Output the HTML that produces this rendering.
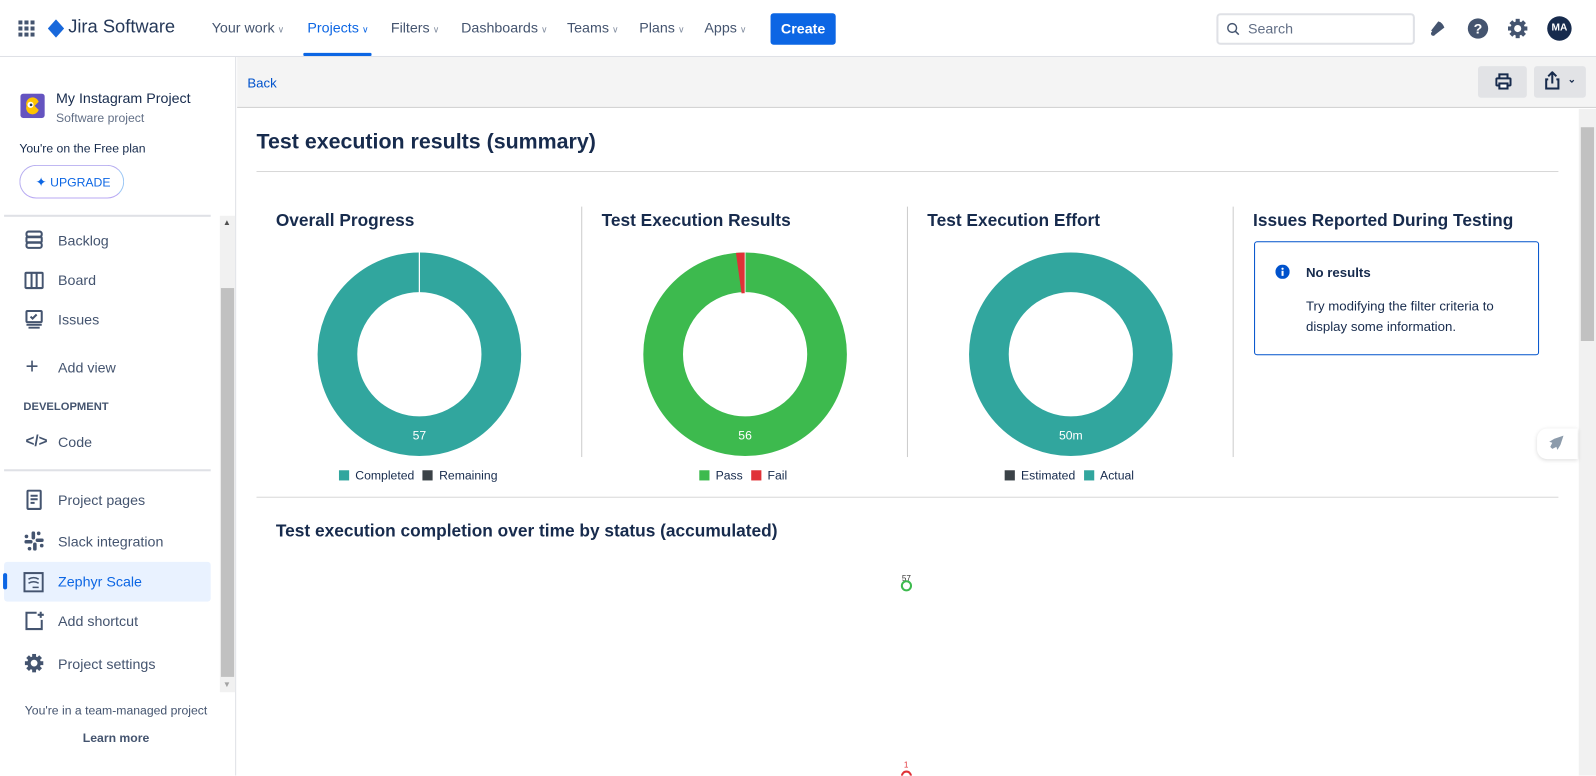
<!DOCTYPE html>
<html><head><meta charset="utf-8">
<style>
*{box-sizing:border-box;margin:0;padding:0}
html,body{width:1596px;height:775px;overflow:hidden;background:#fff;font-family:"Liberation Sans",Arial,sans-serif;color:#172b4d}
#w{position:absolute;left:0;top:0;width:1568px;height:762px;transform:scale(1.0179);transform-origin:0 0;overflow:hidden}
.a{position:absolute}
.nav{left:0;top:0;width:1568px;height:56px;border-bottom:1px solid #dfe1e6;background:#fff}
.ni{top:19px;font-size:14px;color:#44546f;white-space:nowrap}
.ni i{font-style:normal;font-size:9px;color:#8590a2;margin-left:3px}
.side{left:0;top:56px;width:232px;height:706px;border-right:1px solid #dfe1e6;background:#fff}
.it{font-size:14px;color:#44546f;left:57px}
.ic{left:24px}
.ct{font-size:17px;font-weight:bold;color:#172b4d;top:207px;white-space:nowrap}
.sep{width:1px;background:#ccc;top:203px;height:246px}
.lg{font-size:12px;color:#172b4d;top:460px;white-space:nowrap}
.sq{display:inline-block;width:10px;height:10px;vertical-align:-1px;margin-right:6px}
</style></head><body><div id="w">

<div class="a nav"></div>
<svg class="a" style="left:18px;top:20px" width="16" height="16" viewBox="0 0 16 16" fill="#44546f">
<rect x="0" y="0" width="4" height="4"/><rect x="6" y="0" width="4" height="4"/><rect x="12" y="0" width="4" height="4"/>
<rect x="0" y="6" width="4" height="4"/><rect x="6" y="6" width="4" height="4"/><rect x="12" y="6" width="4" height="4"/>
<rect x="0" y="12" width="4" height="4"/><rect x="6" y="12" width="4" height="4"/><rect x="12" y="12" width="4" height="4"/></svg>
<svg class="a" style="left:47px;top:19px" width="16" height="18" viewBox="0 0 16 18"><path d="M8 0 L16 9 L8 18 L0 9Z" fill="#1868db"/></svg>
<div class="a" style="left:67px;top:16px;font-size:18px;color:#253858">Jira Software</div>
<div class="a ni" style="left:208px">Your work<i>∨</i></div>
<div class="a ni" style="left:302px;color:#0c66e4">Projects<i style="color:#0c66e4">∨</i></div>
<div class="a" style="left:298px;top:52px;width:67px;height:3px;background:#0c66e4;border-radius:1px"></div>
<div class="a ni" style="left:384px">Filters<i>∨</i></div>
<div class="a ni" style="left:453px">Dashboards<i>∨</i></div>
<div class="a ni" style="left:557px">Teams<i>∨</i></div>
<div class="a ni" style="left:628px">Plans<i>∨</i></div>
<div class="a ni" style="left:692px">Apps<i>∨</i></div>
<div class="a" style="left:757px;top:13px;width:64px;height:31px;background:#0c66e4;border-radius:3px;color:#fff;font-size:14px;font-weight:bold;text-align:center;line-height:31px">Create</div>
<div class="a" style="left:1195px;top:13px;width:195px;height:31px;border:2px solid #dfe1e6;border-radius:4px"></div>
<svg class="a" style="left:1205px;top:22px" width="13" height="13" viewBox="0 0 13 13"><circle cx="5.5" cy="5.5" r="4.3" stroke="#44546f" stroke-width="1.4" fill="none"/><path d="M8.6 8.6L12 12" stroke="#44546f" stroke-width="1.5"/></svg>
<div class="a" style="left:1226px;top:20px;font-size:14px;color:#626f86">Search</div>
<svg class="a" style="left:1402px;top:18px" width="20" height="20" viewBox="0 0 20 20"><path d="M4 12 L11 3 Q15 4 17 9 L8 16Z" fill="#44546f"/><circle cx="6" cy="15" r="2.2" fill="#44546f"/></svg>
<svg class="a" style="left:1441px;top:17px" width="22" height="22" viewBox="0 0 22 22"><circle cx="11" cy="11" r="10" fill="#44546f"/><text x="11" y="16" text-anchor="middle" font-family="Liberation Sans" font-weight="bold" font-size="14" fill="#fff">?</text></svg>
<svg class="a" style="left:1481px;top:18px" width="20" height="20" viewBox="0 0 20 20"><g fill="#44546f"><circle cx="10" cy="10" r="7"/><rect x="8" y="0.5" width="4" height="19"/><rect x="0.5" y="8" width="19" height="4"/><rect x="8" y="0.5" width="4" height="19" transform="rotate(45 10 10)"/><rect x="8" y="0.5" width="4" height="19" transform="rotate(-45 10 10)"/></g><circle cx="10" cy="10" r="3.5" fill="#fff"/></svg>
<div class="a" style="left:1520px;top:16px;width:24px;height:24px;border-radius:50%;background:#172b4d;color:#fff;font-size:10px;font-weight:bold;text-align:center;line-height:24px">MA</div>

<div class="a side"></div>
<svg class="a" style="left:20px;top:92px" width="24" height="24" viewBox="0 0 24 24"><rect width="24" height="24" rx="3" fill="#6554c0"/><path d="M6 12 A6 6 0 0 1 18 8 L14 12 L18 16 A6 6 0 0 1 6 12Z" fill="#ffc400"/><circle cx="10" cy="11" r="3" fill="#fff"/><circle cx="10.5" cy="11" r="1.3" fill="#253858"/></svg>
<div class="a" style="left:55px;top:88px;font-size:14px;color:#172b4d;font-weight:500">My Instagram Project</div>
<div class="a" style="left:55px;top:109px;font-size:12px;color:#626f86">Software project</div>
<div class="a" style="left:19px;top:139px;font-size:12px;color:#172b4d">You're on the Free plan</div>
<div class="a" style="left:19px;top:162px;width:103px;height:33px;border-radius:17px;border:1.5px solid #b7aef0;border-right-color:#9cc7f5;border-bottom-color:#b8a8f3"></div>
<div class="a" style="left:35px;top:171px;font-size:12px;color:#0c66e4"><span style="font-size:13px">✦</span> UPGRADE</div>
<div class="a" style="left:4px;top:211px;width:203px;height:2px;background:#dfe1e6"></div>
<div class="a" style="left:216px;top:212px;width:15px;height:468px;background:#f1f1f1"></div>
<div class="a" style="left:217px;top:283px;width:13px;height:382px;background:#c1c1c1"></div>
<div class="a" style="left:219px;top:214px;font-size:8px;color:#505050">▲</div>
<div class="a" style="left:219px;top:668px;font-size:8px;color:#a3a3a3">▼</div>

<svg class="a ic" style="top:226px" width="19" height="19" viewBox="0 0 19 19" fill="none" stroke="#44546f" stroke-width="2"><rect x="2" y="1.5" width="15" height="5" rx="2"/><rect x="2" y="7" width="15" height="5" rx="1"/><rect x="2" y="12.5" width="15" height="5" rx="2"/></svg>
<div class="a it" style="top:228px">Backlog</div>
<svg class="a ic" style="top:266px" width="19" height="19" viewBox="0 0 19 19" fill="none" stroke="#44546f" stroke-width="2"><rect x="1" y="2" width="17" height="15" rx="1"/><path d="M7 2v15M12 2v15"/></svg>
<div class="a it" style="top:267px">Board</div>
<svg class="a ic" style="top:304px" width="19" height="19" viewBox="0 0 19 19" fill="none" stroke="#44546f" stroke-width="2"><rect x="2" y="1.5" width="15" height="11" rx="1"/><path d="M6 7l2 2 4-4M2 15h15M4 18h11"/></svg>
<div class="a it" style="top:306px">Issues</div>
<div class="a" style="left:25px;top:349px;font-size:22px;color:#44546f;line-height:22px">+</div>
<div class="a it" style="top:353px">Add view</div>
<div class="a" style="left:23px;top:394px;font-size:11px;font-weight:bold;color:#44546f">DEVELOPMENT</div>
<div class="a" style="left:25px;top:425px;font-size:15px;font-weight:bold;color:#44546f">&lt;/&gt;</div>
<div class="a it" style="top:426px">Code</div>
<div class="a" style="left:4px;top:461px;width:203px;height:2px;background:#dfe1e6"></div>
<svg class="a ic" style="top:481px" width="19" height="20" viewBox="0 0 19 20" fill="none" stroke="#44546f" stroke-width="2"><rect x="3" y="1" width="13" height="18" rx="1"/><path d="M6 6h7M6 9.5h7M6 13h4"/></svg>
<div class="a it" style="top:483px">Project pages</div>
<svg class="a ic" style="top:522px" width="19" height="19" viewBox="0 0 19 19" fill="#44546f"><rect x="7" y="0" width="3.5" height="8" rx="1.7"/><rect x="8.5" y="11" width="3.5" height="8" rx="1.7"/><rect x="0" y="8.5" width="8" height="3.5" rx="1.7"/><rect x="11" y="7" width="8" height="3.5" rx="1.7"/><circle cx="2" cy="5" r="1.8"/><circle cx="17" cy="14" r="1.8"/><circle cx="14" cy="2" r="1.8"/><circle cx="5" cy="17" r="1.8"/></svg>
<div class="a it" style="top:524px">Slack integration</div>
<div class="a" style="left:4px;top:552px;width:203px;height:39px;background:#e9f2ff;border-radius:3px"></div>
<div class="a" style="left:3px;top:563px;width:4px;height:16px;background:#0c66e4;border-radius:2px"></div>
<svg class="a" style="left:23px;top:562px" width="20" height="20" viewBox="0 0 20 20" fill="none" stroke="#44546f" stroke-width="2"><rect x="1" y="1" width="18" height="18"/><path d="M5 7q5-3 10 0M5 11q5-3 10 0M9 15h6" stroke-width="1.5"/></svg>
<div class="a it" style="top:563px;color:#0c66e4">Zephyr Scale</div>
<svg class="a ic" style="top:600px" width="20" height="20" viewBox="0 0 20 20" fill="none" stroke="#44546f" stroke-width="2"><path d="M12 2H2v16h15V9M16 1v6M13 4h6"/></svg>
<div class="a it" style="top:602px">Add shortcut</div>
<svg class="a ic" style="top:642px" width="19" height="19" viewBox="0 0 20 20"><g fill="#44546f"><circle cx="10" cy="10" r="7"/><rect x="8" y="0.5" width="4" height="19"/><rect x="0.5" y="8" width="19" height="4"/><rect x="8" y="0.5" width="4" height="19" transform="rotate(45 10 10)"/><rect x="8" y="0.5" width="4" height="19" transform="rotate(-45 10 10)"/></g><circle cx="10" cy="10" r="3.5" fill="#fff"/></svg>
<div class="a it" style="top:644px">Project settings</div>
<div class="a" style="left:0;width:228px;top:691px;font-size:12px;color:#44546f;text-align:center">You're in a team-managed project</div>
<div class="a" style="left:0;width:228px;top:718px;font-size:12px;color:#44546f;text-align:center;font-weight:bold">Learn more</div>

<div class="a" style="left:233px;top:56px;width:1335px;height:50px;background:#f4f4f4;border-bottom:1px solid #d0d0d0"></div>
<div class="a" style="left:243px;top:74px;font-size:13px;color:#0052cc">Back</div>
<div class="a" style="left:1452px;top:65px;width:48px;height:31px;background:#e2e3e6;border-radius:3px"></div>
<svg class="a" style="left:1469px;top:72px" width="16" height="16" viewBox="0 0 16 16" fill="none" stroke="#172b4d" stroke-width="2"><path d="M4 5V1h8v4"/><rect x="1" y="5" width="14" height="7" rx="1"/><rect x="4" y="10" width="8" height="5" fill="#fff"/></svg>
<div class="a" style="left:1507px;top:65px;width:51px;height:31px;background:#e2e3e6;border-radius:3px"></div>
<svg class="a" style="left:1517px;top:70px" width="16" height="18" viewBox="0 0 16 18" fill="none" stroke="#172b4d" stroke-width="2"><path d="M8 12V2M4 5l4-4 4 4M4 8H2v9h12V8h-2"/></svg>
<div class="a" style="left:1540px;top:73px;font-size:10px;color:#172b4d;font-weight:bold">⌄</div>

<div class="a" style="left:1551px;top:107px;width:17px;height:655px;background:#f1f1f1"></div>
<div class="a" style="left:1553px;top:125px;width:13px;height:210px;background:#c1c1c1"></div>

<div class="a" style="left:252px;top:128px;font-size:21px;font-weight:bold;color:#172b4d;white-space:nowrap">Test execution results (summary)</div>
<div class="a" style="left:252px;top:168px;width:1279px;height:1px;background:#d8d8d8"></div>

<div class="a ct" style="left:271px">Overall Progress</div>
<div class="a ct" style="left:591px">Test Execution Results</div>
<div class="a ct" style="left:911px">Test Execution Effort</div>
<div class="a ct" style="left:1231px">Issues Reported During Testing</div>
<div class="a sep" style="left:571px"></div>
<div class="a sep" style="left:891px"></div>
<div class="a sep" style="left:1211px"></div>

<svg class="a" style="left:311px;top:247px" width="202" height="202" viewBox="0 0 202 202">
<circle cx="101" cy="101" r="80.5" fill="none" stroke="#31a69e" stroke-width="39"/>
<rect x="100.4" y="0" width="1.2" height="41" fill="#fff"/>
<text x="101" y="185" text-anchor="middle" font-family="Liberation Sans" font-size="12" fill="#fff">57</text></svg>
<svg class="a" style="left:631px;top:247px" width="202" height="202" viewBox="0 0 202 202">
<circle cx="101" cy="101" r="80.5" fill="none" stroke="#3dba4e" stroke-width="39"/>
<path d="M92 1.4 L101 1 L101 41 L97.5 41.2Z" fill="#e03137"/>
<path d="M101 1 L101 41" stroke="#fff" stroke-width="0.8"/>
<text x="101" y="185" text-anchor="middle" font-family="Liberation Sans" font-size="12" fill="#fff">56</text></svg>
<svg class="a" style="left:951px;top:247px" width="202" height="202" viewBox="0 0 202 202">
<circle cx="101" cy="101" r="80.5" fill="none" stroke="#31a69e" stroke-width="39"/>
<text x="101" y="185" text-anchor="middle" font-family="Liberation Sans" font-size="12" fill="#fff">50m</text></svg>

<div class="a lg" style="left:333px"><span class="sq" style="background:#31a69e"></span>Completed <span class="sq" style="background:#3b4247;margin-left:5px"></span>Remaining</div>
<div class="a lg" style="left:687px"><span class="sq" style="background:#3dba4e"></span>Pass <span class="sq" style="background:#e03137;margin-left:5px"></span>Fail</div>
<div class="a lg" style="left:987px"><span class="sq" style="background:#3b4247"></span>Estimated <span class="sq" style="background:#31a69e;margin-left:5px"></span>Actual</div>

<div class="a" style="left:1232px;top:237px;width:280px;height:112px;border:1px solid #0052cc;border-radius:3px"></div>
<svg class="a" style="left:1253px;top:260px" width="14" height="14" viewBox="0 0 14 14"><circle cx="7" cy="7" r="7" fill="#0052cc"/><rect x="6" y="6" width="2" height="5" fill="#fff"/><circle cx="7" cy="4" r="1.1" fill="#fff"/></svg>
<div class="a" style="left:1283px;top:260px;font-size:13px;font-weight:bold;color:#172b4d">No results</div>
<div class="a" style="left:1283px;top:291px;font-size:13px;color:#172b4d;line-height:20px">Try modifying the filter criteria to<br>display some information.</div>

<div class="a" style="left:252px;top:488px;width:1279px;height:1px;background:#d8d8d8"></div>
<div class="a" style="left:271px;top:512px;font-size:17px;font-weight:bold;color:#172b4d;white-space:nowrap">Test execution completion over time by status (accumulated)</div>

<div class="a" style="left:886px;top:564px;font-size:8px;color:#333">57</div>
<div class="a" style="left:885px;top:570px;width:11px;height:11px;border:2px solid #3dba4e;border-radius:50%"></div>
<div class="a" style="left:888px;top:747px;font-size:8px;color:#e03137">1</div>
<div class="a" style="left:885px;top:757px;width:11px;height:11px;border:2px solid #e03137;border-radius:50%"></div>

<div class="a" style="left:1510px;top:421px;width:40px;height:30px;background:#fff;border-radius:10px 0 0 10px;box-shadow:0 1px 4px rgba(0,0,0,.15)"></div>
<svg class="a" style="left:1519px;top:427px" width="18" height="18" viewBox="0 0 18 18"><path d="M17 1 L8 4 L3 7 L6 8 L4 12 L6 14 L10 12 L11 15 L14 10 Z" fill="#8c9bab"/></svg>
</div></body></html>
